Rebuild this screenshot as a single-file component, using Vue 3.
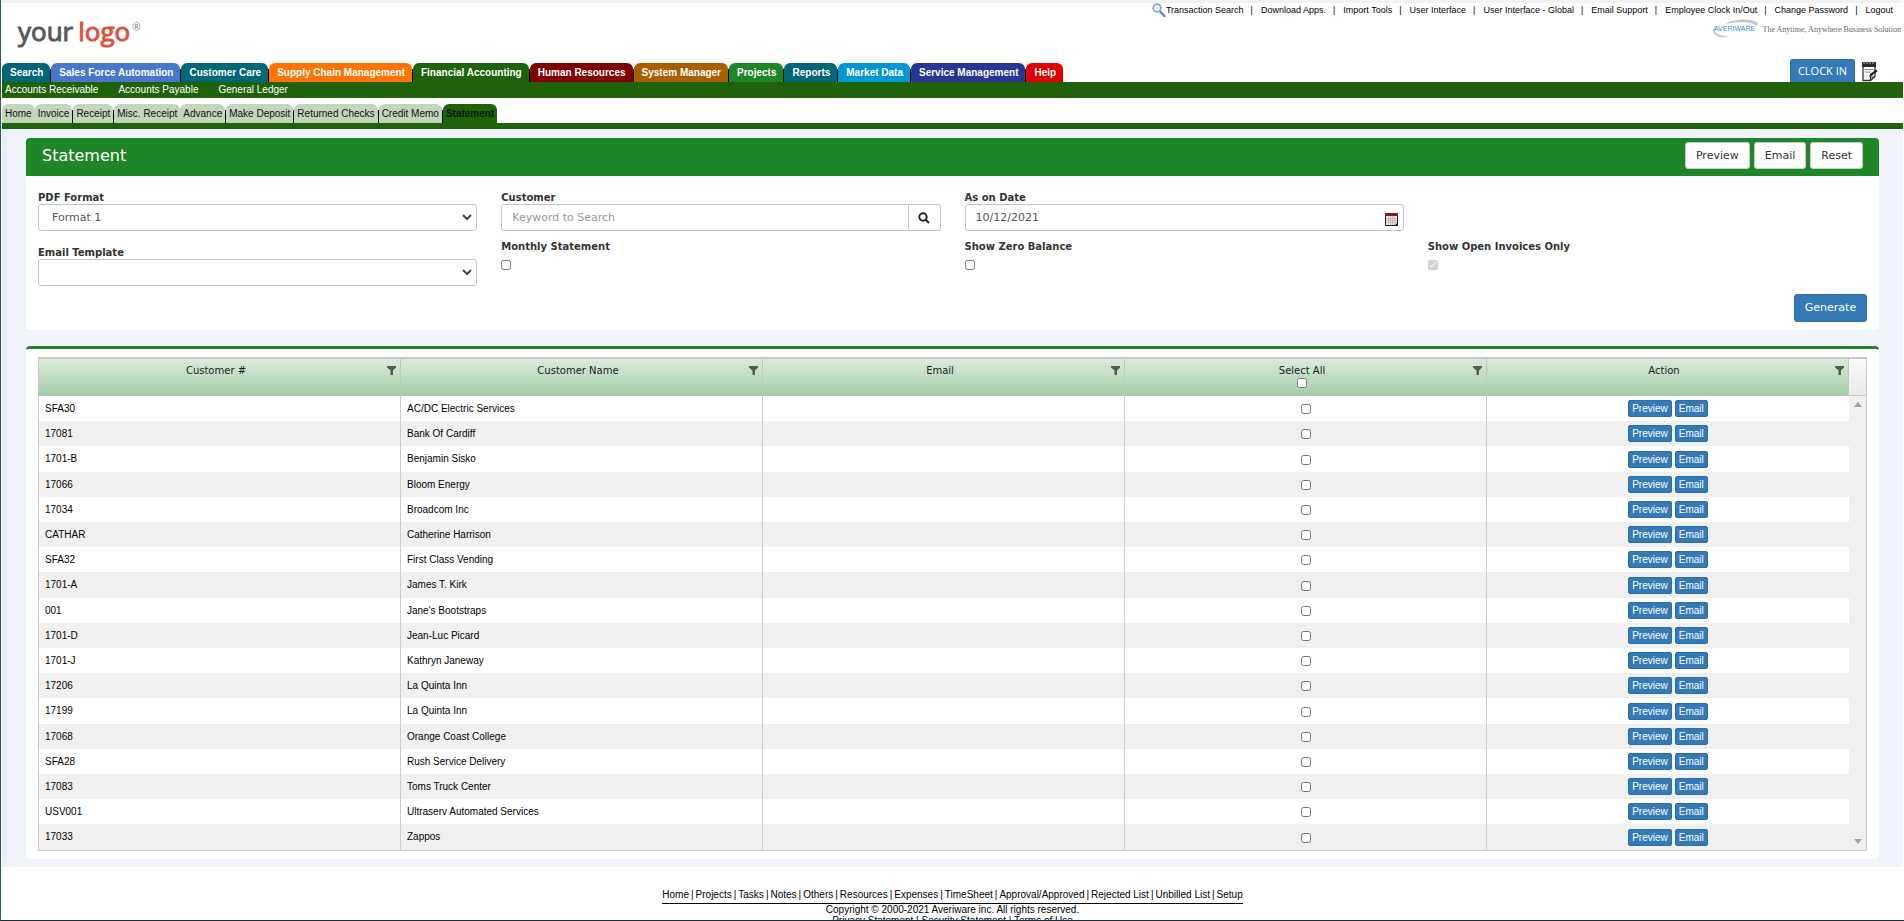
<script setup>
import { ref, computed } from 'vue'

const topLinks = [
  'Transaction Search',
  'Download Apps.',
  'Import Tools',
  'User Interface',
  'User Interface - Global',
  'Email Support',
  'Employee Clock In/Out',
  'Change Password',
  'Logout'
]

const modules = [
  { name: 'Search', tone: 'teal' },
  { name: 'Sales Force Automation', tone: 'blue' },
  { name: 'Customer Care', tone: 'teal' },
  { name: 'Supply Chain Management', tone: 'orange' },
  { name: 'Financial Accounting', tone: 'forest' },
  { name: 'Human Resources', tone: 'maroon' },
  { name: 'System Manager', tone: 'brown' },
  { name: 'Projects', tone: 'green' },
  { name: 'Reports', tone: 'teal' },
  { name: 'Market Data', tone: 'sky' },
  { name: 'Service Management', tone: 'indigo' },
  { name: 'Help', tone: 'red' }
]

const sections = ['Accounts Receivable', 'Accounts Payable', 'General Ledger']

const pages = [
  { name: 'Home' },
  { name: 'Invoice', line: true },
  { name: 'Receipt', line: true },
  { name: 'Misc. Receipt' },
  { name: 'Advance', line: true },
  { name: 'Make Deposit', line: true },
  { name: 'Returned Checks', line: true },
  { name: 'Credit Memo', line: true },
  { name: 'Statement' }
]

const columns = ['Customer #', 'Customer Name', 'Email', 'Select All', 'Action']

const customers = ref([
  { id: 'SFA30', name: 'AC/DC Electric Services', checked: false },
  { id: '17081', name: 'Bank Of Cardiff', checked: false },
  { id: '1701-B', name: 'Benjamin Sisko', checked: false },
  { id: '17066', name: 'Bloom Energy', checked: false },
  { id: '17034', name: 'Broadcom Inc', checked: false },
  { id: 'CATHAR', name: 'Catherine Harrison', checked: false },
  { id: 'SFA32', name: 'First Class Vending', checked: false },
  { id: '1701-A', name: 'James T. Kirk', checked: false },
  { id: '001', name: "Jane's Bootstraps", checked: false },
  { id: '1701-D', name: 'Jean-Luc Picard', checked: false },
  { id: '1701-J', name: 'Kathryn Janeway', checked: false },
  { id: '17206', name: 'La Quinta Inn', checked: false },
  { id: '17199', name: 'La Quinta Inn', checked: false },
  { id: '17068', name: 'Orange Coast College', checked: false },
  { id: 'SFA28', name: 'Rush Service Delivery', checked: false },
  { id: '17083', name: 'Toms Truck Center', checked: false },
  { id: 'USV001', name: 'Ultraserv Automated Services', checked: false },
  { id: '17033', name: 'Zappos', checked: false }
])

const footerLinks = [
  'Home', 'Projects', 'Tasks', 'Notes', 'Others', 'Resources', 'Expenses',
  'TimeSheet', 'Approval/Approved', 'Rejected List', 'Unbilled List', 'Setup'
]

const format = ref('Format 1')
const template = ref('')
const keyword = ref('')
const asOnDate = ref('10/12/2021')
const monthly = ref(false)
const zeroBalance = ref(false)

const allChecked = computed({
  get: () => customers.value.every(c => c.checked),
  set: (value) => customers.value.forEach(c => { c.checked = value })
})

const reset = () => {
  format.value = 'Format 1'
  template.value = ''
  keyword.value = ''
  monthly.value = false
  zeroBalance.value = false
  allChecked.value = false
}
</script>

<template>
  <div class="page">
    <header class="header">
      <div class="header-left">
        <a href="#" class="logo"><span class="logo-your">your</span><span class="logo-name">logo</span><span class="logo-mark">®</span></a>
        <nav class="modules">
          <a v-for="m in modules" :key="m.name" href="#" :class="['module', m.tone]">{{ m.name }}</a>
        </nav>
      </div>

      <div class="header-right">
        <nav class="top-links">
          <svg class="lens" viewBox="0 0 14 14">
            <path d="M8 8.5l4.5 4.5" stroke="#5b84c8" stroke-width="2.4" stroke-linecap="round" />
            <circle cx="5" cy="5" r="3.9" fill="#eef4fd" stroke="#86a5d9" stroke-width="1.7" />
          </svg>
          <template v-for="(link, i) in topLinks" :key="link">
            <span v-if="i > 0" class="bar">|</span>
            <a href="#">{{ link }}</a>
          </template>
        </nav>
        <div class="brand">
          <div class="brand-logo">
            <svg viewBox="0 0 48 20" class="cloud">
              <path d="M14 5C22 0 38-1 46 3c2 1 1 3-1 4-2-4-17-5-31-2z" fill="#c4c8cc" />
              <path d="M5 7C0 10 1 16 8 18c4 1 8 0 10-1-7 0-13-2-14-6 0-2 1-3 1-4z" fill="#ccd0d4" />
            </svg>
            <span>AVERIWARE</span>
          </div>
          <span class="tagline">The Anytime, Anywhere Business Solution</span>
        </div>
        <div class="clock">
          <button type="button" class="clock-in">CLOCK IN</button>
          <a href="#" aria-label="Notes">
            <svg viewBox="0 0 18 21" class="notes">
              <path d="M2 5v14.500h7.500l4.500-4V5z" fill="#fff" stroke="#333" stroke-width="1.300" />
              <path d="M1 1h14v5H1z" fill="#2a2a2a" />
              <path d="M3 0v3M6 0v3M9 0v3M12 0v3" stroke="#bbb" stroke-width="1" />
              <path d="M3.500 8.500h9M3.500 11h6" stroke="#888" stroke-width="1" />
              <path d="M8 16l1-3 6-4.500 1.500 1.700-6 4.800z" fill="#222" />
              <path d="M9.500 19.500v-3.500h4.500" fill="none" stroke="#222" stroke-width="1.200" />
            </svg>
          </a>
        </div>
      </div>
    </header>

    <nav class="sections">
      <a v-for="s in sections" :key="s" href="#">{{ s }}</a>
    </nav>

    <nav class="pages">
      <a
        v-for="p in pages"
        :key="p.name"
        href="#"
        :class="['page-tab', { line: p.line, active: p.name === 'Statement' }]"
      >{{ p.name }}</a>
    </nav>

    <main class="content">
      <section class="panel">
        <div class="panel-head">
          <h1>Statement</h1>
          <div class="panel-buttons">
            <button type="button">Preview</button>
            <button type="button">Email</button>
            <button type="button" @click="reset">Reset</button>
          </div>
        </div>
        <form class="panel-body" @submit.prevent>
          <div class="form-grid">
            <div class="field">
              <label for="format">PDF Format</label>
              <div class="select-wrap">
                <select id="format" v-model="format">
                  <option>Format 1</option>
                  <option>Format 2</option>
                </select>
                <svg viewBox="0 0 10 7" class="chevron"><path d="M1 1l4 4 4-4" /></svg>
              </div>
            </div>
            <div class="field">
              <label for="customer">Customer</label>
              <div class="input-group">
                <input id="customer" v-model="keyword" type="text" placeholder="Keyword to Search" />
                <button type="button" aria-label="Search customer">
                  <svg viewBox="0 0 12 12" class="search-icon">
                    <circle cx="5" cy="5" r="3.700" />
                    <path d="M7.700 7.700l3.300 3.300" />
                  </svg>
                </button>
              </div>
            </div>
            <div class="field">
              <label for="date">As on Date</label>
              <div class="date-wrap">
                <input id="date" v-model="asOnDate" type="text" />
                <svg viewBox="0 0 13 13" class="calendar">
                  <path d="M0 0h13v13H0z" fill="#2c2226" />
                  <path d="M0 0h13v3H0z" fill="#7c1d24" />
                  <path d="M1 3h11v7l-2 2H1z" fill="#f1efee" />
                  <path d="M1 5.500h11M1 7.500h11M1 9.500h11M3.500 3v9M5.500 3v9M7.500 3v9M9.500 3v9" stroke="#b3abab" stroke-width="0.700" />
                </svg>
              </div>
            </div>
            <div class="field template">
              <label for="template">Email Template</label>
              <div class="select-wrap">
                <select id="template" v-model="template">
                  <option value=""></option>
                </select>
                <svg viewBox="0 0 10 7" class="chevron"><path d="M1 1l4 4 4-4" /></svg>
              </div>
            </div>
            <div class="field">
              <label for="monthly">Monthly Statement</label>
              <input id="monthly" v-model="monthly" type="checkbox" />
            </div>
            <div class="field">
              <label for="zero">Show Zero Balance</label>
              <input id="zero" v-model="zeroBalance" type="checkbox" />
            </div>
            <div class="field">
              <label for="open">Show Open Invoices Only</label>
              <input id="open" type="checkbox" checked disabled />
            </div>
          </div>
          <div class="form-actions">
            <button type="submit" class="generate">Generate</button>
          </div>
        </form>
      </section>

      <section class="panel results">
        <div class="grid-wrap">
          <table>
            <thead>
              <tr>
                <th v-for="col in columns" :key="col">
                  <div class="th-inner">
                    <div class="th-title">
                      <template v-if="col === 'Select All'">
                        <label for="all">{{ col }}</label>
                        <input id="all" v-model="allChecked" type="checkbox" />
                      </template>
                      <template v-else>{{ col }}</template>
                    </div>
                    <svg viewBox="0 0 9 9" class="funnel"><path d="M0 0h9v1.500L6 4.500V9H3.500V4.500L0 1.500z" /></svg>
                  </div>
                </th>
              </tr>
            </thead>
            <tbody>
              <tr v-for="c in customers" :key="c.id">
                <td>{{ c.id }}</td>
                <td>{{ c.name }}</td>
                <td></td>
                <td class="center">
                  <input v-model="c.checked" type="checkbox" :aria-label="'Select ' + c.name" />
                </td>
                <td>
                  <div class="row-buttons">
                    <button type="button">Preview</button>
                    <button type="button">Email</button>
                  </div>
                </td>
              </tr>
            </tbody>
          </table>
          <div class="scroller">
            <div class="scroller-head"></div>
            <div class="scroller-track">
              <svg viewBox="0 0 8 5"><path d="M0 5l4-5 4 5z" /></svg>
              <svg viewBox="0 0 8 5"><path d="M0 0h8L4 5z" /></svg>
            </div>
          </div>
        </div>
      </section>
    </main>

    <footer class="footer">
      <nav class="footer-links">
        <template v-for="(link, i) in footerLinks" :key="link">
          <span v-if="i > 0">|</span>
          <a href="#">{{ link }}</a>
        </template>
      </nav>
      <p>Copyright © 2000-2021 Averiware inc. All rights reserved.</p>
      <p><a href="#">Privacy Statement</a> | <a href="#">Security Statement</a> | <a href="#">Terms of Use</a></p>
    </footer>
  </div>
</template>

<style>
body {
  margin: 0;
  background: #fff;
}
</style>

<style scoped>
* {
  box-sizing: border-box;
}

.page {
  display: flex;
  flex-direction: column;
  height: 100vh;
  overflow: hidden;
  border-left: 1px solid #2c5a50;
  border-bottom: 1px solid #1f2d36;
  padding: 0 1px;
  font-family: "Liberation Sans", Arial, sans-serif;
  font-size: 10px;
  line-height: 12px;
  color: #000;
}

.page > * {
  flex-shrink: 0;
}

a {
  color: inherit;
  text-decoration: none;
}

button,
input,
select {
  font: inherit;
}

button {
  cursor: pointer;
}

input[type="checkbox"] {
  width: 10px;
  height: 10px;
  margin: 0;
}

/* Header */
.header {
  display: flex;
  justify-content: space-between;
  border-top: 3px solid #f2f2f2;
}

.header-left {
  display: flex;
  flex-direction: column;
  justify-content: space-between;
}

.logo {
  display: flex;
  align-items: flex-start;
  padding: 10px 0 0 16px;
  font-family: "Open Sans", sans-serif;
  font-size: 26px;
  line-height: 36px;
  font-weight: 400;
}

.logo-your {
  color: #58595b;
  -webkit-text-stroke: 1px #58595b;
}

.logo-name {
  margin-left: 5px;
  color: #d9533f;
  -webkit-text-stroke: 1px #d9533f;
}

.logo-mark {
  margin-left: 2px;
  font-size: 10px;
  line-height: 28px;
  color: #777;
}

.modules {
  display: flex;
}

.module {
  position: relative;
  padding: 4px 7px 3px 8px;
  border-radius: 6px 6px 0 0;
  font-weight: 700;
  color: #fff;
}

.module + .module {
  margin-left: 1px;
}

.module + .module::before {
  content: "";
  position: absolute;
  left: -1px;
  top: 6px;
  bottom: 0;
  width: 1px;
  background: #000;
}

.teal { background: #006678; }
.blue { background: #4876c9; }
.orange { background: #ff7300; }
.forest { background: #1f620b; }
.maroon { background: #800000; }
.brown { background: #a95e00; }
.green { background: #1e8627; }
.sky { background: #0097d3; }
.indigo { background: #283593; }
.red { background: #dc0000; }

.header-right {
  display: flex;
  flex-direction: column;
  align-items: flex-end;
}

.top-links {
  display: flex;
  align-items: center;
  height: 13px;
  padding-right: 10px;
  font-size: 9px;
}

.lens {
  width: 14px;
  height: 14px;
}

.bar {
  margin: 0 8px 0 7px;
}

.brand {
  display: flex;
  align-items: center;
  gap: 4px;
  margin-top: 3px;
  padding-right: 2px;
}

.brand-logo {
  position: relative;
  display: flex;
  align-items: center;
  justify-content: center;
  width: 48px;
  height: 20px;
  font-size: 7px;
  color: #1f8fdc;
}

.cloud {
  position: absolute;
  left: 0;
  top: 0;
  width: 48px;
  height: 20px;
}

.brand-logo span {
  position: relative;
}

.tagline {
  padding-top: 2px;
  font-family: "Liberation Serif", serif;
  font-size: 8px;
  color: #666;
}

.clock {
  display: flex;
  align-items: flex-start;
  gap: 6px;
  margin-top: 20px;
  padding-right: 24px;
}

.clock-in {
  width: 65px;
  height: 23px;
  padding: 0;
  border: 1px solid #2e6da4;
  border-bottom: 0;
  border-radius: 3px 3px 0 0;
  background: #337ab7;
  font-family: "Open Sans", sans-serif;
  font-size: 11px;
  color: #fff;
}

.notes {
  display: block;
  width: 18px;
  height: 21px;
  margin-top: 2px;
}

/* Navigation bars */
.sections {
  display: flex;
  gap: 20px;
  padding: 2px 3px;
  background: #1f620b;
  color: #fff;
}

.pages {
  display: flex;
  padding-top: 6px;
  border-bottom: 6px solid #1f620b;
}

.page-tab {
  position: relative;
  padding: 4px 3px 3px;
  border-radius: 6px 6px 0 0;
  background: #c1d6bd;
  color: #111;
}

.page-tab.line {
  margin-right: 1px;
}

.page-tab.line::after {
  content: "";
  position: absolute;
  right: -1px;
  top: 6px;
  bottom: 0;
  width: 1px;
  background: #000;
}

.page-tab.active {
  background: #1f620b;
  font-weight: 700;
  color: #071c02;
}

/* Panels */
.content {
  padding: 9px 24px 8px;
  background: linear-gradient(90deg, #e9ecf2, #f0f3fa 8px);
  font-family: Verdana, "DejaVu Sans", sans-serif;
}

.panel {
  overflow: hidden;
  border-radius: 4px;
  background: #fff;
}

.panel-head {
  display: flex;
  align-items: center;
  justify-content: space-between;
  padding: 4px 16px 7px;
  background: #1e8627;
}

.panel-head h1 {
  margin: 0;
  font-size: 16px;
  line-height: 24px;
  font-weight: 400;
  color: #fff;
}

.panel-buttons {
  display: flex;
  gap: 4px;
}

.panel-buttons button {
  height: 27px;
  padding: 0 10px;
  border: 1px solid #ccc;
  border-radius: 3px;
  background: #fff;
  font-size: 11px;
  color: #333;
}

.panel-body {
  padding: 15px 0 8px;
}

.form-grid {
  display: grid;
  grid-template-columns: repeat(4, 1fr);
  row-gap: 9px;
}

.field {
  display: flex;
  flex-direction: column;
  align-items: flex-start;
  padding: 0 12px;
}

.field label {
  line-height: 13px;
  font-weight: 700;
  color: #333;
}

.field.template {
  grid-column-start: 1;
  padding-top: 6px;
}

.field input[type="checkbox"] {
  margin-top: 7px;
}

.select-wrap,
.date-wrap,
.input-group {
  position: relative;
  display: flex;
  width: 100%;
}

.field select,
.field input[type="text"] {
  flex: 1;
  min-width: 0;
  height: 27px;
  padding: 0 10px;
  border: 1px solid #c2c2c2;
  border-radius: 3px;
  background: #fff;
  font-size: 11px;
  color: #555;
}

.field select {
  appearance: none;
  padding-left: 13px;
}

.field input::placeholder {
  color: #999;
}

.chevron {
  position: absolute;
  right: 5px;
  top: 10px;
  width: 10px;
  height: 7px;
  fill: none;
  stroke: #444;
  stroke-width: 2;
  pointer-events: none;
}

.calendar {
  position: absolute;
  right: 6px;
  top: 9px;
  width: 13px;
  height: 13px;
}

.input-group input[type="text"] {
  border-radius: 3px 0 0 3px;
}

.input-group button {
  display: flex;
  align-items: center;
  justify-content: center;
  width: 32px;
  padding: 0;
  border: 1px solid #c2c2c2;
  border-left: 0;
  border-radius: 0 3px 3px 0;
  background: #fff;
}

.search-icon {
  width: 12px;
  height: 12px;
  fill: none;
  stroke: #222;
  stroke-width: 2;
}

.form-actions {
  display: flex;
  justify-content: flex-end;
  padding: 8px 12px 0;
}

.generate {
  width: 73px;
  height: 28px;
  padding: 0;
  border: 1px solid #2e6da4;
  border-radius: 3px;
  background: #337ab7;
  font-size: 11px;
  color: #fff;
}

/* Results */
.results {
  margin-top: 16px;
  padding: 8px 12px;
  border-top: 3px solid #25812f;
}

.grid-wrap {
  display: flex;
  border: 1px solid #c8c8c8;
  border-top-width: 2px;
}

table {
  flex: 1;
  width: 100%;
  min-width: 0;
  table-layout: fixed;
  border-collapse: separate;
  border-spacing: 0;
}

th {
  height: 37px;
  padding: 0;
  border-right: 1px solid #b9ccb9;
  border-bottom: 1px solid #b4c0b4;
  background: linear-gradient(#d9ecdb, #a3cfa8);
  font-weight: 400;
  color: #222;
  vertical-align: top;
}

.th-inner {
  display: flex;
  align-items: flex-start;
  padding: 6px 4px 0 6px;
}

.th-title {
  flex: 1;
  display: flex;
  flex-direction: column;
  align-items: center;
  gap: 1px;
}

.funnel {
  width: 9px;
  height: 9px;
  margin-top: 1px;
  fill: #59594f;
}

td {
  height: 25px;
  padding: 0 6px;
  border-right: 1px solid #ccc;
  font-family: "Liberation Sans", Arial, sans-serif;
}

td:last-child {
  border-right: 0;
}

tbody tr:nth-child(even) {
  background: #f0f0f0;
}

/* 18 rows share 454px, so every fifth one takes the spare pixel */
tbody tr:nth-child(5n + 3) td {
  height: 26px;
}

td.center {
  text-align: center;
}

td.center input {
  display: block;
  margin: 1px auto 0;
}

.row-buttons {
  display: flex;
  justify-content: center;
  gap: 3px;
}

.row-buttons button {
  height: 17px;
  padding: 0 3px;
  border: 1px solid #2e6da4;
  border-radius: 2px;
  background: #337ab7;
  line-height: 15px;
  color: #fff;
}

.scroller {
  flex-shrink: 0;
  display: flex;
  flex-direction: column;
  width: 17px;
}

.scroller-head {
  height: 37px;
  border-bottom: 1px solid #c8c8c8;
  background: linear-gradient(#fafafa, #e9e9e9);
}

.scroller-track {
  flex: 1;
  display: flex;
  flex-direction: column;
  align-items: center;
  justify-content: space-between;
  padding: 6px 0;
  background: #f0f0f0;
}

.scroller-track svg {
  width: 8px;
  height: 5px;
  fill: #a0a0a0;
}

/* Footer */
.footer {
  display: flex;
  flex-direction: column;
  align-items: center;
  padding-top: 22px;
}

.footer-links {
  display: flex;
  gap: 2px;
  padding-bottom: 2px;
  border-bottom: 1px solid #000;
}

.footer p {
  margin: 0;
  line-height: 11px;
}
</style>
